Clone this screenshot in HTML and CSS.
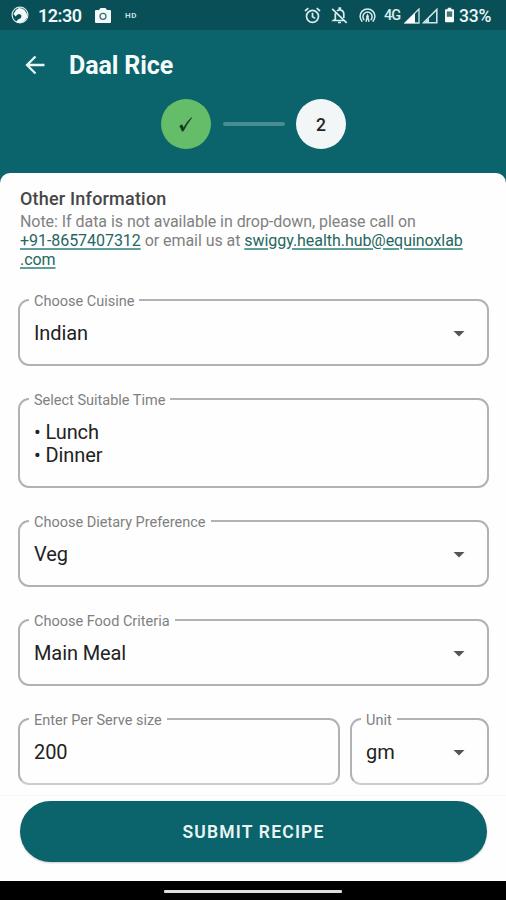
FILE: index.html
```html
<!DOCTYPE html>
<html lang="en">
<head>
<meta charset="utf-8">
<title>Daal Rice</title>
<link rel="stylesheet" href="styles.css">
</head>
<body>
<div class="phone">
  <div class="status">
    <svg class="globe" viewBox="0 0 18 18"><circle cx="9" cy="9" r="7.9" fill="none" stroke="#d3e7e8" stroke-width="1.2"/><path d="M2.500 8 5 4l3-2 3 .5 2.500 1.500 2.500 4v3.500l-3 4-5 1.500-3-1 2-2.500 3-1.500.5-2.500-2-1.500-2 .5-2 2z" fill="#f2fafa"/></svg>
    <span class="clock">12:30</span>
    <svg class="camera" viewBox="0 0 16 15"><path d="M1 2h3l1.500-2h5L12 2h3q1 0 1 1v11q0 1-1 1H1q-1 0-1-1V3q0-1 1-1z" fill="#f2fafa"/><circle cx="8" cy="8.300" r="3" fill="none" stroke="#3c7075" stroke-width="1.300"/></svg>
    <span class="hd">HD</span>
    <span class="spacer"></span>
    <svg class="alarm" viewBox="0 0 17 17" fill="none" stroke="#d9eced" stroke-width="1.700"><circle cx="8.500" cy="9.300" r="6"/><path d="M8.500 5.700v4l2.700 1.700M1 4l3.300-2.800M16 4l-3.300-2.800"/></svg>
    <svg class="bell" viewBox="0 0 17 17" fill="none" stroke="#d9eced" stroke-width="1.700"><path d="M4.300 6.200v6.100L2.700 13.500h10.200M6 3.900q1-.8 2.300-1V1.200h1v1.700q3.500.8 3.500 4.200v4M1.200 1.800l14.500 14M7 15.500h3"/></svg>
    <svg class="hotspot" viewBox="0 0 17 17" fill="none" stroke="#d9eced" stroke-width="1.500"><path d="M3.300 14.600A7.400 7.400 0 1 1 13.700 14.600M5.300 13A4.600 4.600 0 1 1 11.700 13"/><path d="M7 14.800 8.500 9l1.500 5.800"/><circle cx="8.500" cy="9.200" r="1.200" fill="#d9eced" stroke="none"/></svg>
    <span class="net">4G</span>
    <svg class="signal" viewBox="0 0 16 16"><path d="M1 15 15 1v14z" fill="none" stroke="#cfe5e5" stroke-width="1.300"/><path d="M1 15 11 5v10z" fill="#fff"/></svg>
    <svg class="signal" viewBox="0 0 16 16"><path d="M1.500 14.800 14.800 1.500v13.300z" fill="none" stroke="#cfe5e5" stroke-width="1.600"/><path d="M2 15 7 10v5z" fill="#cfe5e5"/></svg>
    <svg class="battery" viewBox="0 0 10 16"><path d="M3 0h4v1.700h2q1 0 1 1V15q0 1-1 1H1q-1 0-1-1V2.700q0-1 1-1h2z" fill="#f5fcfc"/><path d="M2 4h6v6H2z" fill="#467579"/></svg>
    <span class="percent">33%</span>
  </div>
  <header class="header">
    <div class="titlebar">
      <svg class="back" viewBox="0 0 20 20" fill="none" stroke="#e9f5f5" stroke-width="2.300"><path d="M19.500 10H2M10.500 1.500 2 10l8.500 8.500"/></svg>
      <h1 class="title">Daal Rice</h1>
    </div>
    <div class="steps">
      <div class="step done"><svg class="check" viewBox="0 0 16 18"><path d="M1 11.400Q2.500 8.500 4 9.300q1 .6 1.300 3Q8.400 6 13.600 1.500q.8-.5 1.200-.1Q9.300 8.300 6 15.200q-.8 1.500-2.400 1.300Q2.300 12.200 1 11.400z" fill="#153c20"/></svg></div>
      <div class="bar"></div>
      <div class="step">2</div>
    </div>
  </header>
  <main class="sheet">
    <h2 class="heading">Other Information</h2>
    <p class="note">Note: If data is not available in drop-down, please call on<br><a>+91-8657407312</a> or email us at <a>swiggy.health.hub@equinoxlab</a><br><a>.com</a></p>
    <form class="fields">
      <div class="field"><span class="label">Choose Cuisine</span><span class="value">Indian</span><i class="caret"></i></div>
      <div class="field tall"><span class="label">Select Suitable Time</span><span class="value">• Lunch<br>• Dinner</span></div>
      <div class="field"><span class="label">Choose Dietary Preference</span><span class="value">Veg</span><i class="caret"></i></div>
      <div class="field"><span class="label">Choose Food Criteria</span><span class="value">Main Meal</span><i class="caret"></i></div>
      <div class="row">
        <div class="field size"><span class="label">Enter Per Serve size</span><span class="value">200</span></div>
        <div class="field unit"><span class="label">Unit</span><span class="value">gm</span><i class="caret"></i></div>
      </div>
    </form>
    <div class="footer"><div class="submit">SUBMIT RECIPE</div></div>
  </main>
  <div class="nav"><div class="handle"></div></div>
</div>
</body>
</html>
```
FILE: styles.css
```css
* { box-sizing: border-box; }
body { margin: 0; font-family: Roboto, "Liberation Sans", sans-serif; }
svg { display: block; flex: none; }
.phone { width: 506px; height: 900px; display: flex; flex-direction: column; background: #0b636b; overflow: hidden; }
.status { height: 30px; flex: none; background: #084f57; display: flex; align-items: center; padding: 1px 14px 0 11px; color: #edf8f8; white-space: nowrap; }
.globe { width: 18px; height: 18px; margin-top: -1px; }
.clock { width: 44px; margin-left: 9px; font-size: 18px; font-weight: 600; letter-spacing: -.5px; }
.camera { width: 16px; height: 15px; margin-left: 13px; margin-top: -1px; }
.hd { margin-left: 14px; font-size: 8px; font-weight: 700; letter-spacing: .5px; color: #c5dedf; }
.spacer { flex: 1; }
.alarm { width: 17px; height: 17px; margin-top: -1px; }
.bell { width: 17px; height: 17px; margin-left: 10px; margin-top: -1px; }
.hotspot { width: 17px; height: 17px; margin-left: 11px; margin-top: -1px; }
.net { width: 17px; margin-left: 8px; margin-right: 1px; margin-top: -1px; font-size: 14.5px; font-weight: 500; letter-spacing: -.9px; color: #d9eced; }
.signal { width: 16px; height: 16px; margin-left: 2px; }
.battery { width: 9px; height: 16px; margin-left: 7px; margin-top: -1px; }
.percent { width: 33px; margin-left: 5px; font-size: 17.5px; font-weight: 500; letter-spacing: -.2px; }

.header { height: 143px; flex: none; }
.titlebar { height: 69px; display: flex; align-items: center; padding: 2px 0 0 25px; }
.back { width: 20px; height: 20px; margin-top: -2px; }
.title { margin: 1px 0 0 24px; color: #f4fbfb; font-size: 25px; line-height: 30px; font-weight: 700; letter-spacing: -.1px; }
.steps { display: flex; align-items: center; padding-left: 161px; }
.step { width: 50px; height: 50px; border-radius: 50%; background: #f2f6f6; color: #202627; display: flex; align-items: center; justify-content: center; font-size: 17.5px; font-weight: 500; padding-top: 1px; }
.done { background: #65bd69; padding-top: 0; }
.check { width: 16px; height: 17px; }
.bar { width: 62px; height: 4px; margin: 0 11px 0 12px; background: #4a8c94; border-radius: 2px; }

.sheet { height: 708px; flex: none; background: #fefefe; border-radius: 10px 10px 0 0; padding-top: 15px; position: relative; }
.heading { margin: 0 20px; font-size: 18px; line-height: 22px; font-weight: 500; letter-spacing: .2px; color: #464646; }
.note { margin: 2px 0 0 20px; font-size: 16px; line-height: 19px; letter-spacing: -.05px; color: #818181; white-space: nowrap; }
.note a { color: #27665f; text-decoration: underline; text-decoration-color: #5f9f99; text-decoration-thickness: 2px; text-underline-offset: 2px; }
.fields { margin: 30px 17px 0 18px; }
.field { position: relative; height: 67px; margin-bottom: 32px; border: 2px solid #b2b2b2; border-radius: 11px; display: flex; align-items: center; justify-content: space-between; padding: 2px 22px 0 14px; }
.tall { height: 90px; }
.label { position: absolute; left: 9px; top: -8px; padding: 0 5px; background: #fefefe; color: #808080; font-size: 14.5px; line-height: 17px; white-space: nowrap; }
.value { font-size: 20px; line-height: 23px; letter-spacing: -.1px; color: #222; white-space: nowrap; }
.caret { width: 12px; height: 6px; background: #555; clip-path: polygon(0 0, 100% 0, 50% 100%); }
.row { display: flex; gap: 10px; }
.size { width: 322px; }
.unit { flex: 1; }
.row .field { border-bottom-color: #ccc; }
.footer { position: absolute; left: 0; right: 0; bottom: 0; height: 86px; border-top: 1px solid #f7f7f7; padding: 5px 19px 0 20px; }
.submit { height: 61px; border-radius: 31px; background: #0b636b; box-shadow: 0 1px 2px #0003; color: #e9f5f5; display: flex; align-items: center; justify-content: center; font-size: 17.5px; font-weight: 600; letter-spacing: 1.2px; }
.nav { height: 19px; flex: none; background: #000; display: flex; justify-content: center; padding-top: 9px; }
.handle { width: 178px; height: 3px; border-radius: 1px; background: #ddd; }
```
